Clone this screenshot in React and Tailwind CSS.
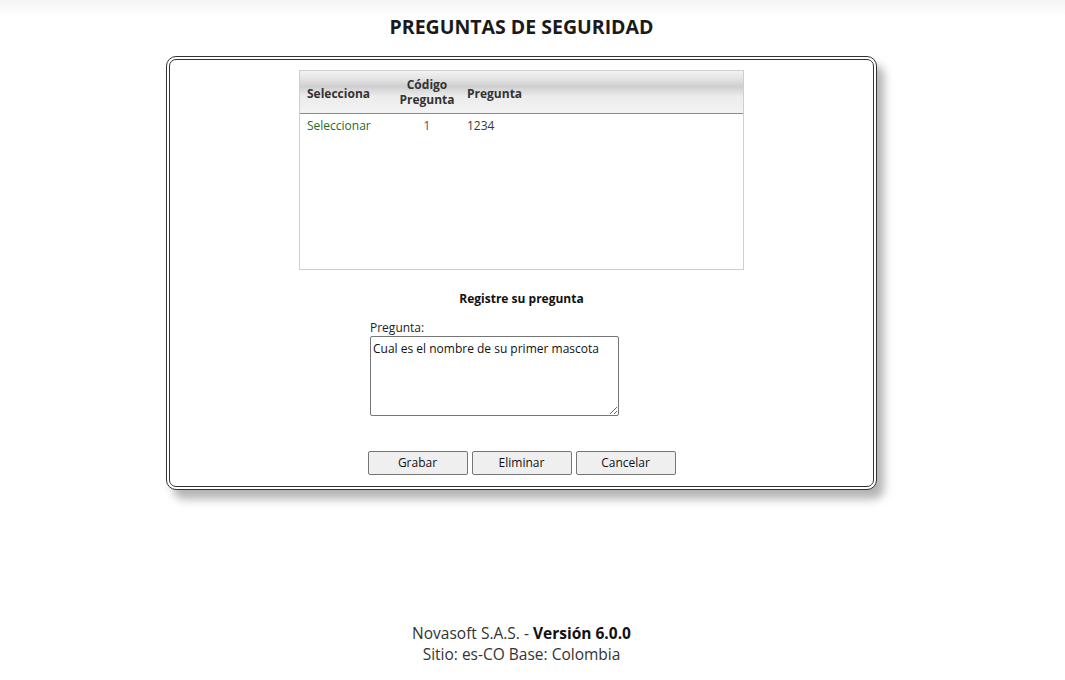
import React from "react";

export default function App() {
  const font = { fontFamily: '"Open Sans", "Noto Sans", sans-serif' };
  return (
    <div className="min-h-[680px] w-full bg-white text-[#222]" style={font}>
      <div className="h-[16px] w-full bg-gradient-to-b from-[#f4f4f4] to-white absolute top-0 left-0" />
      <div className="relative w-[1043px]">
        <h1 className="pt-[14px] text-center text-[19.5px] font-bold leading-[25px] text-[#1a1a1a]">
          PREGUNTAS DE SEGURIDAD
        </h1>
        <div className="mx-auto mt-[17px] w-[711px] rounded-[10px] border-[4px] border-double border-[#333] bg-white shadow-[7px_9px_10px_rgba(0,0,0,0.3)]">
          <div className="pt-[10px] pb-[11px]">
            <div className="mx-auto w-[445px]">
              <div className="h-[200px] border border-[#cfcfcf] bg-white">
                <table className="w-full border-collapse text-[12px] leading-[15px]">
                  <thead>
                    <tr className="h-[42px] bg-[linear-gradient(to_bottom,#f3f3f3_0%,#e2e2e2_20%,#cfcfcf_38%,#ececec_62%,#f2f2f2_100%)] border-b border-[#8a8a8a]">
                      <th className="w-[95px] pl-[7px] pt-[3px] text-left font-bold text-[#333]">Selecciona</th>
                      <th className="w-[64px] pt-[1px] text-center font-bold text-[#333]">
                        Código
                        <br />
                        Pregunta
                      </th>
                      <th className="pl-[8px] pt-[3px] text-left font-bold text-[#333]">Pregunta</th>
                    </tr>
                  </thead>
                  <tbody>
                    <tr className="h-[25px]">
                      <td className="pl-[7px] text-[#1f6b1f]">Seleccionar</td>
                      <td className="text-center text-[#8b3a3a]">1</td>
                      <td className="pl-[8px] text-[#333a44]">1234</td>
                    </tr>
                  </tbody>
                </table>
              </div>
              <div className="mt-[21px] text-center text-[12px] font-bold leading-[16px] text-[#111]">
                Registre su pregunta
              </div>
              <div className="mt-[13px] pl-[71px]">
                <div className="text-[12px] leading-[16px] text-[#222]">Pregunta:</div>
                <textarea
                  defaultValue="Cual es el nombre de su primer mascota"
                  className="block h-[80px] w-[249px] resize-y rounded-[2px] border border-[#767676] px-[2px] py-[3px] text-[12px] leading-[17px] text-[#111]"
                  style={font}
                />
              </div>
            </div>
            <div className="mt-[35px] flex justify-center gap-[4px]">
              {["Grabar", "Eliminar", "Cancelar"].map((t) => (
                <button
                  key={t}
                  className="h-[24px] w-[100px] rounded-[2px] border border-[#767676] bg-[#efefef] text-[12px] text-[#111]"
                  style={font}
                >
                  {t}
                </button>
              ))}
            </div>
          </div>
        </div>
        <div className="mt-[133px] text-center text-[15.5px] leading-[21px] text-[#333]">
          <div>
            Novasoft S.A.S. - <span className="font-bold text-[#111]">Versión 6.0.0</span>
          </div>
          <div>Sitio: es-CO Base: Colombia</div>
        </div>
      </div>
    </div>
  );
}
